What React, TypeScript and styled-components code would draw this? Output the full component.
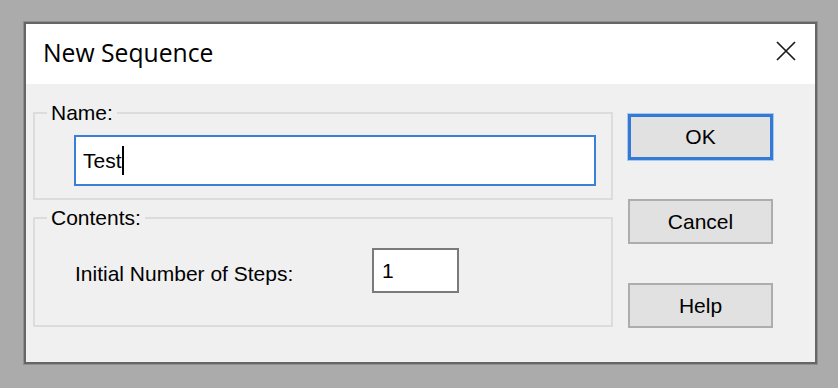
import React from 'react'
import styled, { createGlobalStyle } from 'styled-components'

const GlobalStyle = createGlobalStyle`
  html, body {
    margin: 0;
    padding: 0;
    background: #ababab;
  }
  body {
    font-family: 'Liberation Sans', Arial, sans-serif;
  }
`

const Backdrop = styled.div`
  width: 838px;
  height: 388px;
  padding: 22px 0 0 24px;
  box-sizing: border-box;
`

const Dialog = styled.div`
  width: 793px;
  height: 342px;
  box-sizing: border-box;
  border: 2px solid #666666;
  box-shadow: 0 0 0 1px #8f8f8f;
  display: flex;
  flex-direction: column;
  background: #f0f0f0;
`

const TitleBar = styled.div`
  height: 60px;
  flex: none;
  background: #ffffff;
  display: flex;
  align-items: center;
  justify-content: space-between;
  padding: 0 19px 0 17px;
`

const Title = styled.div`
  font-family: 'Open Sans', 'Noto Sans', sans-serif;
  font-size: 24.7px;
  line-height: 1;
  color: #000000;
  margin-top: -2px;
`

const CloseButton = styled.div`
  width: 20px;
  height: 20px;
  display: flex;
  margin-top: -6px;
`

const Body = styled.div`
  flex: 1;
  display: flex;
  gap: 15px;
  padding: 17px 0 0 7px;
`

const Groups = styled.div`
  width: 580px;
  display: flex;
  flex-direction: column;
  gap: 6px;
`

const Group = styled.fieldset<{ $pt: number; $pb: number }>`
  margin: 0;
  border: 2px solid #dcdcdc;
  padding: ${(p) => p.$pt}px 0 ${(p) => p.$pb}px 12px;
  min-width: 0;
`

const Legend = styled.legend`
  padding: 0 4px;
  font-size: 21px;
  line-height: 24px;
  color: #000000;
`

const TextBox = styled.div<{ $focused?: boolean; $width: number; $height: number }>`
  width: ${(p) => p.$width}px;
  height: ${(p) => p.$height}px;
  box-sizing: border-box;
  background: #ffffff;
  border: 2px solid ${(p) => (p.$focused ? '#3a7fd8' : '#7a7a7a')};
  display: flex;
  align-items: center;
  padding-left: ${(p) => (p.$focused ? 7 : 8)}px;
  font-size: 21px;
  color: #000000;
`

const Caret = styled.span`
  width: 2px;
  height: 29px;
  background: #000000;
  margin-left: 0;
  margin-top: -1px;
`

const NameBox = styled.div`
  padding-left: 27px;
`

const FieldRow = styled.div`
  display: grid;
  grid-template-columns: 297px 87px;
  align-items: center;
  padding-left: 28px;
`

const FieldLabel = styled.span`
  font-size: 21px;
  color: #000000;
  margin-top: 6px;
`

const Buttons = styled.div`
  width: 145px;
  display: flex;
  flex-direction: column;
  padding-top: 13px;
  gap: 39px;
`

const Button = styled.button<{ $default?: boolean }>`
  height: ${(p) => (p.$default ? 46 : 45)}px;
  box-sizing: border-box;
  margin: 0;
  padding: 0;
  background: #e1e1e1;
  border: ${(p) => (p.$default ? '3px solid #3479d6' : '2px solid #adadad')};
  box-shadow: ${(p) => (p.$default ? '0 0 0 1px #a9c8ef' : 'none')};
  font-family: 'Liberation Sans', Arial, sans-serif;
  font-size: 21px;
  color: #000000;
  cursor: default;
`

export default function App() {
  return (
    <>
      <GlobalStyle />
      <Backdrop>
        <Dialog>
          <TitleBar>
            <Title>New Sequence</Title>
            <CloseButton>
              <svg width="20" height="20" viewBox="0 0 20 20">
                <path d="M1 1 L19 19 M19 1 L1 19" stroke="#1a1a1a" strokeWidth="1.7" fill="none" />
              </svg>
            </CloseButton>
          </TitleBar>
          <Body>
            <Groups>
              <Group $pt={10} $pb={12}>
                <Legend>Name:</Legend>
                <NameBox>
                  <TextBox $focused $width={522} $height={51}>
                    Test
                    <Caret />
                  </TextBox>
                </NameBox>
              </Group>
              <Group $pt={18} $pb={32}>
                <Legend>Contents:</Legend>
                <FieldRow>
                  <FieldLabel>Initial Number of Steps:</FieldLabel>
                  <TextBox $width={87} $height={45}>1</TextBox>
                </FieldRow>
              </Group>
            </Groups>
            <Buttons>
              <Button $default>OK</Button>
              <Button>Cancel</Button>
              <Button>Help</Button>
            </Buttons>
          </Body>
        </Dialog>
      </Backdrop>
    </>
  )
}
